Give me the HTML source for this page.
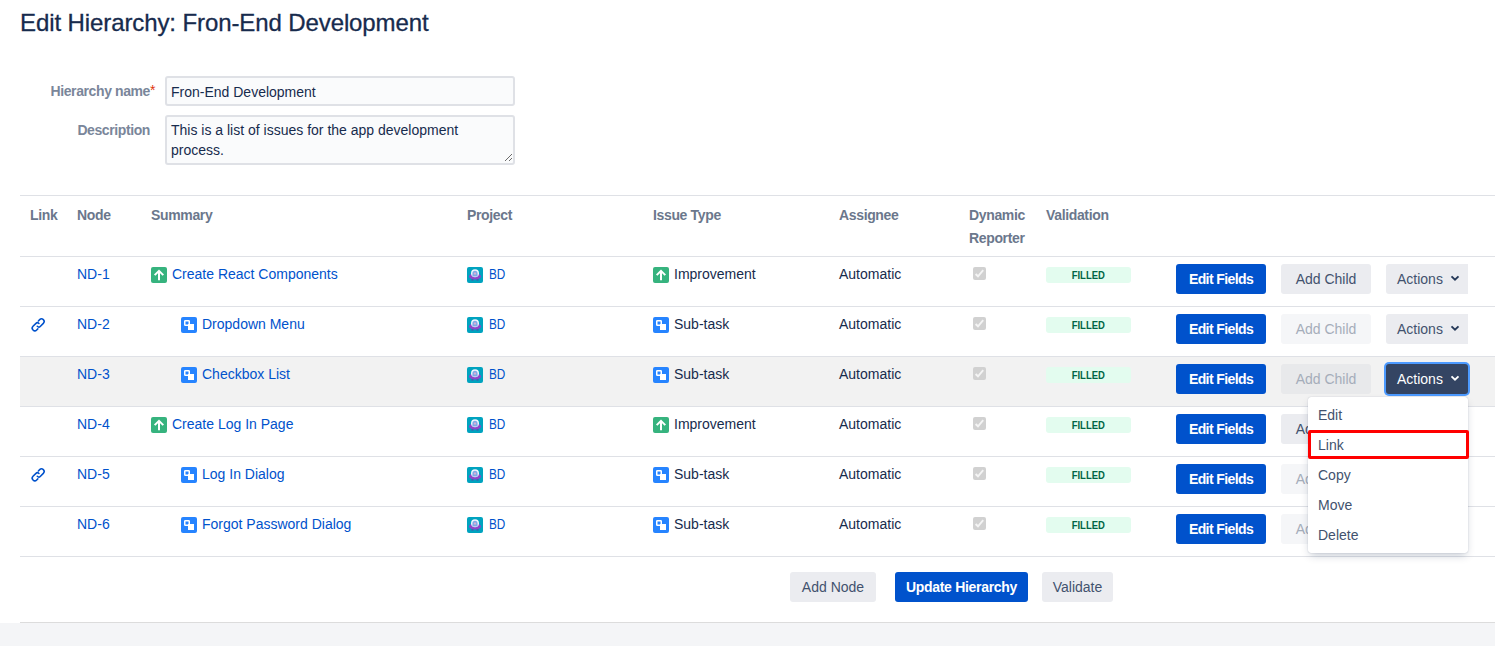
<!DOCTYPE html>
<html>
<head>
<meta charset="utf-8">
<style>
*{box-sizing:border-box;margin:0;padding:0}
html,body{width:1495px;height:646px;overflow:hidden;background:#fff}
body{font-family:"Liberation Sans",sans-serif;font-size:14px;color:#172B4D;position:relative}
.abs{position:absolute;white-space:nowrap}
.t{position:absolute;white-space:nowrap;line-height:20px;height:20px}
h1{position:absolute;left:20px;top:7px;letter-spacing:-0.1px;-webkit-text-stroke:0.3px #172B4D;font-size:24px;font-weight:400;line-height:32px;color:#172B4D;white-space:nowrap}
.lbl{position:absolute;font-weight:700;color:#7A869A;text-align:right;white-space:nowrap;letter-spacing:-0.4px;line-height:20px}
.inp{position:absolute;left:165px;width:350px;border:2px solid #DFE1E6;background:#FAFBFC;border-radius:3px}
.hline{position:absolute;left:20px;right:0;height:1px;background:#DFE1E6}
.th{position:absolute;font-weight:700;color:#6B778C;line-height:23px;letter-spacing:-0.35px;white-space:nowrap}
.row{position:absolute;left:20px;right:0;height:49px}
.lnk{color:#0052CC}
.ico{position:absolute;width:16px;height:16px}
.cb{position:absolute;width:13px;height:13px;border-radius:2px;background:#CDCDCD}
.loz{position:absolute;width:85px;height:16px;border-radius:3px;background:#E3FCEF;color:#006644;font-size:11px;font-weight:700;text-align:center;line-height:16px}
.btn{position:absolute;height:30px;border-radius:3px;line-height:30px;text-align:center;white-space:nowrap}
.primary{background:#0052CC;color:#fff;font-weight:700;letter-spacing:-0.6px}
.def{background:#EBECF0;color:#42526E}
.dis{background:rgba(9,30,66,0.04);color:#A5ADBA}
.menu{position:absolute;left:1308px;top:397px;width:160px;height:156px;background:#fff;border-radius:3px;box-shadow:0 4px 8px -2px rgba(9,30,66,0.25),0 0 1px rgba(9,30,66,0.31)}
.mi{position:absolute;left:10px;color:#42526E;line-height:20px}
</style>
</head>
<body>
<h1>Edit Hierarchy: Fron-End Development</h1>

<div class="lbl" style="right:1345px;top:81px">Hierarchy name</div>
<div class="abs" style="left:150px;top:83px;color:#DE350B;font-size:14px;line-height:14px">*</div>
<div class="inp" style="top:76px;height:30px"></div>
<div class="t" style="left:171px;top:82px">Fron-End Development</div>

<div class="lbl" style="right:1345px;top:120px">Description</div>
<div class="inp" style="top:115px;height:50px"></div>
<div class="t" style="left:171px;top:120px">This is a list of issues for the app development</div>
<div class="t" style="left:171px;top:140px">process.</div>
<svg class="abs" style="left:503px;top:152px;width:10px;height:10px" viewBox="0 0 10 10"><path d="M9 2L2 9M9 6L6 9" stroke="#6B6B6B" stroke-width="1"/></svg>

<div class="hline" style="top:195px"></div>

<!-- header -->
<div class="th" style="left:30px;top:204px">Link</div>
<div class="th" style="left:77px;top:204px">Node</div>
<div class="th" style="left:151px;top:204px">Summary</div>
<div class="th" style="left:467px;top:204px">Project</div>
<div class="th" style="left:653px;top:204px">Issue Type</div>
<div class="th" style="left:839px;top:204px">Assignee</div>
<div class="th" style="left:969px;top:204px">Dynamic<br>Reporter</div>
<div class="th" style="left:1046px;top:204px">Validation</div>
<div class="hline" style="top:256px"></div>

<div id="rows"><div class="t lnk" style="left:77px;top:264px">ND-1</div>
<svg class="ico" style="left:151px;top:267px" viewBox="0 0 16 16"><rect width="16" height="16" rx="2" fill="#36B37E"/><path d="M8 13.2V4.2M3.7 8.1L8 3.8L12.3 8.1" stroke="#fff" stroke-width="2" fill="none"/></svg>
<div class="t lnk" style="left:172px;top:264px">Create React Components</div>
<svg class="ico" style="left:467px;top:267px" viewBox="0 0 16 16"><rect width="16" height="16" rx="2" fill="#00A3BF"/><path d="M4.5 12.2h2v1.2h-2zM9.5 12.2h2v1.2h-2z" fill="#5243AA"/><ellipse cx="8" cy="9.4" rx="6" ry="3.1" fill="#8E44C8"/><circle cx="8" cy="6.2" r="4" fill="#F4F6FF"/><path d="M5.4 6.4a2.6 2.6 0 0 1 5.2 0V9.4H5.4z" fill="#7FA9E8"/><rect x="6.9" y="5.6" width="2.2" height="2" rx="0.5" fill="#D6B3D8"/></svg>
<div class="t lnk" style="left:489px;top:264px;transform:scaleX(0.84);transform-origin:0 0">BD</div>
<svg class="ico" style="left:653px;top:267px" viewBox="0 0 16 16"><rect width="16" height="16" rx="2" fill="#36B37E"/><path d="M8 13.2V4.2M3.7 8.1L8 3.8L12.3 8.1" stroke="#fff" stroke-width="2" fill="none"/></svg>
<div class="t" style="left:674px;top:264px">Improvement</div>
<div class="t" style="left:839px;top:264px">Automatic</div>
<svg class="ico" style="left:973px;top:267px;width:13px;height:13px" viewBox="0 0 13 13"><rect width="13" height="13" rx="2" fill="#D1D1D1"/><path d="M2.6 7L5 9.3L10.2 3.2" stroke="#F4F4F4" stroke-width="1.9" fill="none"/></svg>
<div class="loz" style="left:1046px;top:267px"><span style="display:inline-block;transform:scaleX(0.86)">FILLED</span></div>
<div class="btn primary" style="left:1176px;top:264px;width:90px">Edit Fields</div>
<div class="btn def" style="left:1281px;top:264px;width:90px">Add Child</div>
<div class="btn def" style="left:1386px;top:264px;width:82px;border-radius:3px 0 0 3px;text-align:left;padding-left:11px">Actions</div>
<svg class="abs" style="left:1450px;top:274px;width:10px;height:8px" viewBox="0 0 10 8"><path d="M1.5 2.4L5 5.8L8.5 2.4" stroke="#253858" stroke-width="1.9" fill="none"/></svg>
<svg class="ico" style="left:28px;top:315px;width:20px;height:20px" viewBox="0 0 20 20"><g transform="matrix(0.7071,-0.7071,0.7071,0.7071,10.1,9.9)" fill="none" stroke="#0052CC" stroke-width="1.55" stroke-linecap="round"><path d="M-3 2.6H-4.6A2.6 2.6 0 0 1 -4.6 -2.6H-0.4Q1.6 -2.6 1.6 -0.4"/><path d="M3 -2.6H4.8A2.6 2.6 0 0 1 4.8 2.6H0.4Q-1.6 2.6 -1.6 0.4"/></g></svg>
<div class="t lnk" style="left:77px;top:314px">ND-2</div>
<svg class="ico" style="left:181px;top:317px" viewBox="0 0 16 16"><rect width="16" height="16" rx="2" fill="#2684FF"/><rect x="7" y="7" width="6" height="6" fill="#fff"/><rect x="3.75" y="3.75" width="4.5" height="4.5" rx="0.6" fill="none" stroke="#fff" stroke-width="1.5"/></svg>
<div class="t lnk" style="left:202px;top:314px">Dropdown Menu</div>
<svg class="ico" style="left:467px;top:317px" viewBox="0 0 16 16"><rect width="16" height="16" rx="2" fill="#00A3BF"/><path d="M4.5 12.2h2v1.2h-2zM9.5 12.2h2v1.2h-2z" fill="#5243AA"/><ellipse cx="8" cy="9.4" rx="6" ry="3.1" fill="#8E44C8"/><circle cx="8" cy="6.2" r="4" fill="#F4F6FF"/><path d="M5.4 6.4a2.6 2.6 0 0 1 5.2 0V9.4H5.4z" fill="#7FA9E8"/><rect x="6.9" y="5.6" width="2.2" height="2" rx="0.5" fill="#D6B3D8"/></svg>
<div class="t lnk" style="left:489px;top:314px;transform:scaleX(0.84);transform-origin:0 0">BD</div>
<svg class="ico" style="left:653px;top:317px" viewBox="0 0 16 16"><rect width="16" height="16" rx="2" fill="#2684FF"/><rect x="7" y="7" width="6" height="6" fill="#fff"/><rect x="3.75" y="3.75" width="4.5" height="4.5" rx="0.6" fill="none" stroke="#fff" stroke-width="1.5"/></svg>
<div class="t" style="left:674px;top:314px">Sub-task</div>
<div class="t" style="left:839px;top:314px">Automatic</div>
<svg class="ico" style="left:973px;top:317px;width:13px;height:13px" viewBox="0 0 13 13"><rect width="13" height="13" rx="2" fill="#D1D1D1"/><path d="M2.6 7L5 9.3L10.2 3.2" stroke="#F4F4F4" stroke-width="1.9" fill="none"/></svg>
<div class="loz" style="left:1046px;top:317px"><span style="display:inline-block;transform:scaleX(0.86)">FILLED</span></div>
<div class="btn primary" style="left:1176px;top:314px;width:90px">Edit Fields</div>
<div class="btn dis" style="left:1281px;top:314px;width:90px">Add Child</div>
<div class="btn def" style="left:1386px;top:314px;width:82px;border-radius:3px 0 0 3px;text-align:left;padding-left:11px">Actions</div>
<svg class="abs" style="left:1450px;top:324px;width:10px;height:8px" viewBox="0 0 10 8"><path d="M1.5 2.4L5 5.8L8.5 2.4" stroke="#253858" stroke-width="1.9" fill="none"/></svg>
<div class="abs" style="left:20px;right:0;top:357px;height:49px;background:#F2F2F2"></div>
<div class="t lnk" style="left:77px;top:364px">ND-3</div>
<svg class="ico" style="left:181px;top:367px" viewBox="0 0 16 16"><rect width="16" height="16" rx="2" fill="#2684FF"/><rect x="7" y="7" width="6" height="6" fill="#fff"/><rect x="3.75" y="3.75" width="4.5" height="4.5" rx="0.6" fill="none" stroke="#fff" stroke-width="1.5"/></svg>
<div class="t lnk" style="left:202px;top:364px">Checkbox List</div>
<svg class="ico" style="left:467px;top:367px" viewBox="0 0 16 16"><rect width="16" height="16" rx="2" fill="#00A3BF"/><path d="M4.5 12.2h2v1.2h-2zM9.5 12.2h2v1.2h-2z" fill="#5243AA"/><ellipse cx="8" cy="9.4" rx="6" ry="3.1" fill="#8E44C8"/><circle cx="8" cy="6.2" r="4" fill="#F4F6FF"/><path d="M5.4 6.4a2.6 2.6 0 0 1 5.2 0V9.4H5.4z" fill="#7FA9E8"/><rect x="6.9" y="5.6" width="2.2" height="2" rx="0.5" fill="#D6B3D8"/></svg>
<div class="t lnk" style="left:489px;top:364px;transform:scaleX(0.84);transform-origin:0 0">BD</div>
<svg class="ico" style="left:653px;top:367px" viewBox="0 0 16 16"><rect width="16" height="16" rx="2" fill="#2684FF"/><rect x="7" y="7" width="6" height="6" fill="#fff"/><rect x="3.75" y="3.75" width="4.5" height="4.5" rx="0.6" fill="none" stroke="#fff" stroke-width="1.5"/></svg>
<div class="t" style="left:674px;top:364px">Sub-task</div>
<div class="t" style="left:839px;top:364px">Automatic</div>
<svg class="ico" style="left:973px;top:367px;width:13px;height:13px" viewBox="0 0 13 13"><rect width="13" height="13" rx="2" fill="#D1D1D1"/><path d="M2.6 7L5 9.3L10.2 3.2" stroke="#F4F4F4" stroke-width="1.9" fill="none"/></svg>
<div class="loz" style="left:1046px;top:367px"><span style="display:inline-block;transform:scaleX(0.86)">FILLED</span></div>
<div class="btn primary" style="left:1176px;top:364px;width:90px">Edit Fields</div>
<div class="btn dis" style="left:1281px;top:364px;width:90px">Add Child</div>
<div class="btn" style="left:1386px;top:364px;width:82px;background:#344563;color:#fff;box-shadow:0 0 0 2px #4C9AFF;text-align:left;padding-left:11px">Actions</div>
<svg class="abs" style="left:1450px;top:374px;width:10px;height:8px" viewBox="0 0 10 8"><path d="M1.5 2.4L5 5.8L8.5 2.4" stroke="#fff" stroke-width="1.9" fill="none"/></svg>
<div class="t lnk" style="left:77px;top:414px">ND-4</div>
<svg class="ico" style="left:151px;top:417px" viewBox="0 0 16 16"><rect width="16" height="16" rx="2" fill="#36B37E"/><path d="M8 13.2V4.2M3.7 8.1L8 3.8L12.3 8.1" stroke="#fff" stroke-width="2" fill="none"/></svg>
<div class="t lnk" style="left:172px;top:414px">Create Log In Page</div>
<svg class="ico" style="left:467px;top:417px" viewBox="0 0 16 16"><rect width="16" height="16" rx="2" fill="#00A3BF"/><path d="M4.5 12.2h2v1.2h-2zM9.5 12.2h2v1.2h-2z" fill="#5243AA"/><ellipse cx="8" cy="9.4" rx="6" ry="3.1" fill="#8E44C8"/><circle cx="8" cy="6.2" r="4" fill="#F4F6FF"/><path d="M5.4 6.4a2.6 2.6 0 0 1 5.2 0V9.4H5.4z" fill="#7FA9E8"/><rect x="6.9" y="5.6" width="2.2" height="2" rx="0.5" fill="#D6B3D8"/></svg>
<div class="t lnk" style="left:489px;top:414px;transform:scaleX(0.84);transform-origin:0 0">BD</div>
<svg class="ico" style="left:653px;top:417px" viewBox="0 0 16 16"><rect width="16" height="16" rx="2" fill="#36B37E"/><path d="M8 13.2V4.2M3.7 8.1L8 3.8L12.3 8.1" stroke="#fff" stroke-width="2" fill="none"/></svg>
<div class="t" style="left:674px;top:414px">Improvement</div>
<div class="t" style="left:839px;top:414px">Automatic</div>
<svg class="ico" style="left:973px;top:417px;width:13px;height:13px" viewBox="0 0 13 13"><rect width="13" height="13" rx="2" fill="#D1D1D1"/><path d="M2.6 7L5 9.3L10.2 3.2" stroke="#F4F4F4" stroke-width="1.9" fill="none"/></svg>
<div class="loz" style="left:1046px;top:417px"><span style="display:inline-block;transform:scaleX(0.86)">FILLED</span></div>
<div class="btn primary" style="left:1176px;top:414px;width:90px">Edit Fields</div>
<div class="btn def" style="left:1281px;top:414px;width:90px">Add Child</div>
<div class="btn def" style="left:1386px;top:414px;width:82px;border-radius:3px 0 0 3px;text-align:left;padding-left:11px">Actions</div>
<svg class="abs" style="left:1450px;top:424px;width:10px;height:8px" viewBox="0 0 10 8"><path d="M1.5 2.4L5 5.8L8.5 2.4" stroke="#253858" stroke-width="1.9" fill="none"/></svg>
<svg class="ico" style="left:28px;top:465px;width:20px;height:20px" viewBox="0 0 20 20"><g transform="matrix(0.7071,-0.7071,0.7071,0.7071,10.1,9.9)" fill="none" stroke="#0052CC" stroke-width="1.55" stroke-linecap="round"><path d="M-3 2.6H-4.6A2.6 2.6 0 0 1 -4.6 -2.6H-0.4Q1.6 -2.6 1.6 -0.4"/><path d="M3 -2.6H4.8A2.6 2.6 0 0 1 4.8 2.6H0.4Q-1.6 2.6 -1.6 0.4"/></g></svg>
<div class="t lnk" style="left:77px;top:464px">ND-5</div>
<svg class="ico" style="left:181px;top:467px" viewBox="0 0 16 16"><rect width="16" height="16" rx="2" fill="#2684FF"/><rect x="7" y="7" width="6" height="6" fill="#fff"/><rect x="3.75" y="3.75" width="4.5" height="4.5" rx="0.6" fill="none" stroke="#fff" stroke-width="1.5"/></svg>
<div class="t lnk" style="left:202px;top:464px">Log In Dialog</div>
<svg class="ico" style="left:467px;top:467px" viewBox="0 0 16 16"><rect width="16" height="16" rx="2" fill="#00A3BF"/><path d="M4.5 12.2h2v1.2h-2zM9.5 12.2h2v1.2h-2z" fill="#5243AA"/><ellipse cx="8" cy="9.4" rx="6" ry="3.1" fill="#8E44C8"/><circle cx="8" cy="6.2" r="4" fill="#F4F6FF"/><path d="M5.4 6.4a2.6 2.6 0 0 1 5.2 0V9.4H5.4z" fill="#7FA9E8"/><rect x="6.9" y="5.6" width="2.2" height="2" rx="0.5" fill="#D6B3D8"/></svg>
<div class="t lnk" style="left:489px;top:464px;transform:scaleX(0.84);transform-origin:0 0">BD</div>
<svg class="ico" style="left:653px;top:467px" viewBox="0 0 16 16"><rect width="16" height="16" rx="2" fill="#2684FF"/><rect x="7" y="7" width="6" height="6" fill="#fff"/><rect x="3.75" y="3.75" width="4.5" height="4.5" rx="0.6" fill="none" stroke="#fff" stroke-width="1.5"/></svg>
<div class="t" style="left:674px;top:464px">Sub-task</div>
<div class="t" style="left:839px;top:464px">Automatic</div>
<svg class="ico" style="left:973px;top:467px;width:13px;height:13px" viewBox="0 0 13 13"><rect width="13" height="13" rx="2" fill="#D1D1D1"/><path d="M2.6 7L5 9.3L10.2 3.2" stroke="#F4F4F4" stroke-width="1.9" fill="none"/></svg>
<div class="loz" style="left:1046px;top:467px"><span style="display:inline-block;transform:scaleX(0.86)">FILLED</span></div>
<div class="btn primary" style="left:1176px;top:464px;width:90px">Edit Fields</div>
<div class="btn dis" style="left:1281px;top:464px;width:90px">Add Child</div>
<div class="btn def" style="left:1386px;top:464px;width:82px;border-radius:3px 0 0 3px;text-align:left;padding-left:11px">Actions</div>
<svg class="abs" style="left:1450px;top:474px;width:10px;height:8px" viewBox="0 0 10 8"><path d="M1.5 2.4L5 5.8L8.5 2.4" stroke="#253858" stroke-width="1.9" fill="none"/></svg>
<div class="t lnk" style="left:77px;top:514px">ND-6</div>
<svg class="ico" style="left:181px;top:517px" viewBox="0 0 16 16"><rect width="16" height="16" rx="2" fill="#2684FF"/><rect x="7" y="7" width="6" height="6" fill="#fff"/><rect x="3.75" y="3.75" width="4.5" height="4.5" rx="0.6" fill="none" stroke="#fff" stroke-width="1.5"/></svg>
<div class="t lnk" style="left:202px;top:514px">Forgot Password Dialog</div>
<svg class="ico" style="left:467px;top:517px" viewBox="0 0 16 16"><rect width="16" height="16" rx="2" fill="#00A3BF"/><path d="M4.5 12.2h2v1.2h-2zM9.5 12.2h2v1.2h-2z" fill="#5243AA"/><ellipse cx="8" cy="9.4" rx="6" ry="3.1" fill="#8E44C8"/><circle cx="8" cy="6.2" r="4" fill="#F4F6FF"/><path d="M5.4 6.4a2.6 2.6 0 0 1 5.2 0V9.4H5.4z" fill="#7FA9E8"/><rect x="6.9" y="5.6" width="2.2" height="2" rx="0.5" fill="#D6B3D8"/></svg>
<div class="t lnk" style="left:489px;top:514px;transform:scaleX(0.84);transform-origin:0 0">BD</div>
<svg class="ico" style="left:653px;top:517px" viewBox="0 0 16 16"><rect width="16" height="16" rx="2" fill="#2684FF"/><rect x="7" y="7" width="6" height="6" fill="#fff"/><rect x="3.75" y="3.75" width="4.5" height="4.5" rx="0.6" fill="none" stroke="#fff" stroke-width="1.5"/></svg>
<div class="t" style="left:674px;top:514px">Sub-task</div>
<div class="t" style="left:839px;top:514px">Automatic</div>
<svg class="ico" style="left:973px;top:517px;width:13px;height:13px" viewBox="0 0 13 13"><rect width="13" height="13" rx="2" fill="#D1D1D1"/><path d="M2.6 7L5 9.3L10.2 3.2" stroke="#F4F4F4" stroke-width="1.9" fill="none"/></svg>
<div class="loz" style="left:1046px;top:517px"><span style="display:inline-block;transform:scaleX(0.86)">FILLED</span></div>
<div class="btn primary" style="left:1176px;top:514px;width:90px">Edit Fields</div>
<div class="btn dis" style="left:1281px;top:514px;width:90px">Add Child</div>
<div class="btn def" style="left:1386px;top:514px;width:82px;border-radius:3px 0 0 3px;text-align:left;padding-left:11px">Actions</div>
<svg class="abs" style="left:1450px;top:524px;width:10px;height:8px" viewBox="0 0 10 8"><path d="M1.5 2.4L5 5.8L8.5 2.4" stroke="#253858" stroke-width="1.9" fill="none"/></svg></div><!--/rows-->

<div class="hline" style="top:306px"></div>
<div class="hline" style="top:356px"></div>
<div class="hline" style="top:406px"></div>
<div class="hline" style="top:456px"></div>
<div class="hline" style="top:506px"></div>
<div class="hline" style="top:556px"></div>

<div class="btn def" style="left:790px;top:572px;width:86px">Add Node</div>
<div class="btn primary" style="left:895px;top:572px;width:133px;letter-spacing:-0.3px">Update Hierarchy</div>
<div class="btn def" style="left:1042px;top:572px;width:71px">Validate</div>

<div class="abs" style="left:20px;top:622px;right:0;height:1px;background:#DCDCDC"></div>
<div class="abs" style="left:0;top:623px;right:0;bottom:0;background:#F4F5F7"></div>










<!--menu--><div class="menu">
<div class="mi" style="top:8px">Edit</div>
<div class="mi" style="top:38px">Link</div>
<div class="mi" style="top:68px">Copy</div>
<div class="mi" style="top:98px">Move</div>
<div class="mi" style="top:128px">Delete</div>
</div>
<div class="abs" style="left:1308px;top:430px;width:161px;height:29px;border:3px solid #FF0000;border-radius:2px"></div><!--/menu-->
</body>
</html>
